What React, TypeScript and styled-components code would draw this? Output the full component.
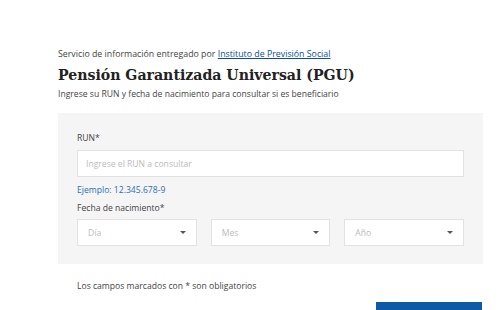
import React from "react";
import styled, { createGlobalStyle } from "styled-components";

const Global = createGlobalStyle`
  body {
    margin: 0;
    background: #ffffff;
    font-family: "Open Sans", "Liberation Sans", sans-serif;
    color: #333;
  }
`;

const Page = styled.div`
  padding: 48px 17px 0 58px;
  height: 310px;
  box-sizing: border-box;
  overflow: hidden;
`;

const Provider = styled.p`
  margin: 0;
  font-size: 8.8px;
  line-height: 12px;
  color: #444;
  a {
    color: #0b4ea2;
    text-decoration: underline;
  }
`;

const Title = styled.h1`
  margin: 4px 0 0;
  font-family: "DejaVu Serif", serif;
  font-stretch: condensed;
  font-weight: 700;
  font-size: 15.7px;
  line-height: 22px;
  color: #222;
`;

const Lead = styled.p`
  margin: 2px 0 0;
  font-size: 8.6px;
  line-height: 12px;
  color: #444;
`;

const Panel = styled.div`
  margin-top: 13px;
  background: #f5f5f5;
  padding: 19px 19px 18px;
  display: flex;
  flex-direction: column;
`;

const Label = styled.label`
  font-size: 8.6px;
  line-height: 12px;
  color: #444;
`;

const Field = styled.div`
  margin-top: 6px;
  height: 27px;
  background: #fff;
  border: 1px solid #e2e2e2;
  box-sizing: border-box;
  display: flex;
  align-items: center;
  padding: 0 8px;
  font-size: 8.6px;
  color: #bbb;
`;

const Hint = styled.span`
  margin: 7px 0 6px;
  font-size: 8.6px;
  line-height: 12px;
  color: #2a6fb5;
`;

const Selects = styled.div`
  margin-top: 5px;
  display: grid;
  grid-template-columns: repeat(3, 1fr);
  gap: 14px;
`;

const Select = styled(Field)`
  margin-top: 0;
  justify-content: space-between;
  padding: 0 10px;
`;

const Caret = styled.span`
  width: 0;
  height: 0;
  border-left: 3px solid transparent;
  border-right: 3px solid transparent;
  border-top: 3px solid #555;
`;

const Note = styled.p`
  margin: 16px 0 0 19px;
  font-size: 8.6px;
  line-height: 12px;
  color: #444;
`;

const Actions = styled.div`
  margin-top: 10px;
  display: flex;
  justify-content: flex-end;
  padding-right: 1px;
`;

const Button = styled.button`
  width: 106px;
  height: 30px;
  border: none;
  background: #0e5aa7;
`;

export default function App() {
  return (
    <>
      <Global />
      <Page>
        <Provider>
          Servicio de información entregado por <a href="#">Instituto de Previsión Social</a>
        </Provider>
        <Title>Pensión Garantizada Universal (PGU)</Title>
        <Lead>Ingrese su RUN y fecha de nacimiento para consultar si es beneficiario</Lead>
        <Panel>
          <Label>RUN*</Label>
          <Field>Ingrese el RUN a consultar</Field>
          <Hint>Ejemplo: 12.345.678-9</Hint>
          <Label>Fecha de nacimiento*</Label>
          <Selects>
            {["Día", "Mes", "Año"].map((t) => (
              <Select key={t}>
                {t}
                <Caret />
              </Select>
            ))}
          </Selects>
        </Panel>
        <Note>Los campos marcados con * son obligatorios</Note>
        <Actions>
          <Button aria-label="Consultar" />
        </Actions>
      </Page>
    </>
  );
}
